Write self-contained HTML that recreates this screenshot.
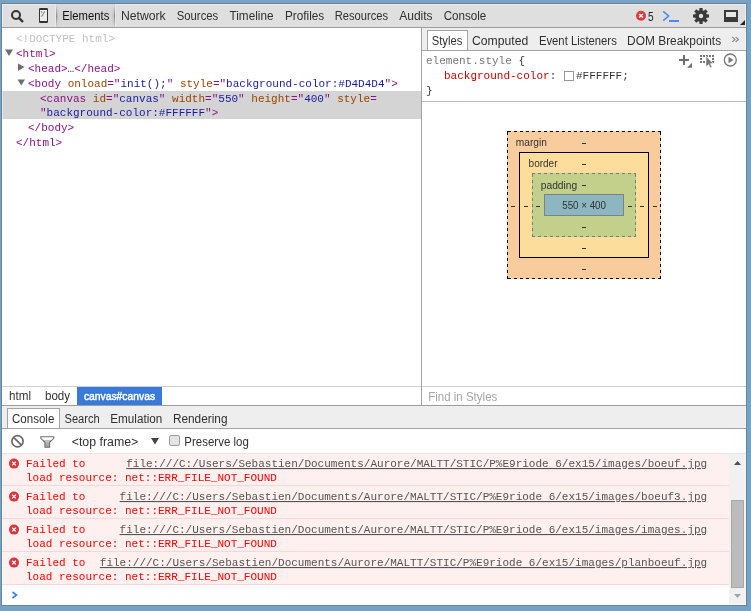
<!DOCTYPE html>
<html><head><meta charset="utf-8"><title>DevTools</title>
<style>
html,body{margin:0;padding:0;width:751px;height:611px;overflow:hidden;background:#7aa2c0;}
svg{display:block;will-change:transform;}
.ui{font-family:"Liberation Sans",sans-serif;font-size:12px;}
.mono{font-family:"Liberation Mono",monospace;font-size:11px;}
.c{shape-rendering:crispEdges;}
.bm{font-family:"Liberation Sans",sans-serif;font-size:10px;}
</style></head><body>
<svg width="751" height="611" viewBox="0 0 751 611">
<defs>
<linearGradient id="selTab" x1="0" y1="0" x2="0" y2="1">
<stop offset="0" stop-color="#dcdcdc"/><stop offset="0.5" stop-color="#d3d3d3"/><stop offset="1" stop-color="#dadada"/>
</linearGradient>
<linearGradient id="selEdge" x1="0" y1="0" x2="0" y2="1">
<stop offset="0" stop-color="#dcdcdc"/><stop offset="0.1" stop-color="#c8c8c8"/><stop offset="0.5" stop-color="#8a8a8a"/><stop offset="0.9" stop-color="#c4c4c4"/><stop offset="1" stop-color="#d8d8d8"/>
</linearGradient>
<linearGradient id="selEdge2" x1="0" y1="0" x2="0" y2="1">
<stop offset="0" stop-color="#dadada"/><stop offset="0.5" stop-color="#c2c2c2"/><stop offset="1" stop-color="#d6d6d6"/>
</linearGradient>
<linearGradient id="selEdge3" x1="0" y1="0" x2="0" y2="1">
<stop offset="0" stop-color="#dadada"/><stop offset="0.5" stop-color="#cbcbcb"/><stop offset="1" stop-color="#d6d6d6"/>
</linearGradient>
</defs>
<!-- window frame -->
<rect class="c" x="0" y="0" width="751" height="611" fill="#7aa2c0"/>
<rect class="c" x="1" y="3" width="746" height="603" fill="#5f87a5"/>
<rect class="c" x="2" y="4" width="744" height="601" fill="#ffffff"/>

<!-- main toolbar -->
<rect class="c" x="2" y="4" width="744" height="23" fill="#dfdfdf"/>
<rect class="c" x="2" y="4" width="744" height="1" fill="#ebe9e8"/>
<rect class="c" x="2" y="27" width="744" height="1" fill="#9d9d9d"/>
<!-- selected Elements tab -->
<rect class="c" x="56" y="4" width="59" height="23" fill="url(#selTab)"/>
<rect class="c" x="55" y="4" width="1" height="23" fill="#e7e7e7"/>
<rect class="c" x="115" y="4" width="1" height="23" fill="#e7e7e7"/>
<rect class="c" x="56" y="5" width="1" height="22" fill="url(#selEdge)"/>
<rect class="c" x="114" y="5" width="1" height="22" fill="url(#selEdge)"/>
<rect class="c" x="57" y="5" width="1" height="22" fill="url(#selEdge2)"/>
<rect class="c" x="113" y="5" width="1" height="22" fill="url(#selEdge2)"/>
<rect class="c" x="58" y="5" width="1" height="22" fill="url(#selEdge3)"/>
<rect class="c" x="112" y="5" width="1" height="22" fill="url(#selEdge3)"/>
<!-- search icon -->
<circle cx="16" cy="15" r="4" fill="none" stroke="#333" stroke-width="2"/>
<line x1="18.8" y1="17.8" x2="23" y2="22" stroke="#333" stroke-width="2.4"/>
<!-- phone icon -->
<rect x="39" y="8" width="9" height="15" rx="1.2" fill="#333"/>
<rect class="c" x="40" y="10" width="7" height="11" fill="#ececec"/>
<path d="M41.2 11.3 L42 12.8 M44.8 11.2 L41.5 16.8" stroke="#8a8a8a" stroke-width="1.1" fill="none"/>
<g class="ui" fill="#303030">
<text x="62.3" y="20" fill="#111" textLength="47.0" lengthAdjust="spacingAndGlyphs">Elements</text>
<text x="120.9" y="20" textLength="44.8" lengthAdjust="spacingAndGlyphs">Network</text>
<text x="176.8" y="20" textLength="41.4" lengthAdjust="spacingAndGlyphs">Sources</text>
<text x="229.5" y="20" textLength="44.0" lengthAdjust="spacingAndGlyphs">Timeline</text>
<text x="285.0" y="20" textLength="39.2" lengthAdjust="spacingAndGlyphs">Profiles</text>
<text x="334.7" y="20" textLength="53.4" lengthAdjust="spacingAndGlyphs">Resources</text>
<text x="399.2" y="20" textLength="33.4" lengthAdjust="spacingAndGlyphs">Audits</text>
<text x="443.7" y="20" textLength="42.6" lengthAdjust="spacingAndGlyphs">Console</text>
<text x="648" y="21.2" style="font-size:13px" textLength="5.6" lengthAdjust="spacingAndGlyphs" fill="#222">5</text>
</g>
<!-- error badge -->
<circle cx="641" cy="15.8" r="5" fill="#e03a3e"/>
<path d="M639.2 14 L642.8 17.6 M642.8 14 L639.2 17.6" stroke="#fff" stroke-width="1.4"/>
<!-- console drawer icon >_ -->
<path d="M663.2 11.4 L668.6 16 L663.2 20.6" stroke="#4a8af4" stroke-width="1.6" fill="none"/>
<rect class="c" x="669" y="20" width="10" height="2" fill="#4a8af4"/>
<!-- gear -->
<g transform="translate(701,16)" fill="#3a3a3a">
<circle r="6"/>
<g id="tooth"><rect x="-1.6" y="-8" width="3.2" height="4"/></g>
<rect x="-1.6" y="-8" width="3.2" height="4" transform="rotate(45)"/>
<rect x="-1.6" y="-8" width="3.2" height="4" transform="rotate(90)"/>
<rect x="-1.6" y="-8" width="3.2" height="4" transform="rotate(135)"/>
<rect x="-1.6" y="-8" width="3.2" height="4" transform="rotate(180)"/>
<rect x="-1.6" y="-8" width="3.2" height="4" transform="rotate(225)"/>
<rect x="-1.6" y="-8" width="3.2" height="4" transform="rotate(270)"/>
<rect x="-1.6" y="-8" width="3.2" height="4" transform="rotate(315)"/>
<circle r="2.2" fill="#dfdfdf"/>
</g>
<!-- dock icon -->
<rect class="c" x="724" y="10" width="14" height="12" fill="#3a3a3a"/>
<rect class="c" x="726" y="12" width="10" height="5" fill="#e6e6e6"/>
<path d="M745 20 L745 25 L740 25 Z" fill="#222"/>

<!-- ============ Elements tree ============ -->
<rect class="c" x="2" y="91" width="419" height="28" fill="#d4d4d4"/>
<!-- triangles -->
<path d="M5 49.5 L13 49.5 L9 56 Z" fill="#6e6e6e"/>
<path d="M18 63.5 L24.5 67 L18 71 Z" fill="#6e6e6e"/>
<path d="M17.5 79.5 L25 79.5 L21.25 85.5 Z" fill="#6e6e6e"/>
<g class="mono">
<text x="16" y="42" fill="#c0c0c0">&lt;!DOCTYPE html&gt;</text>
<text x="16" y="57" fill="#881280">&lt;html&gt;</text>
<text x="28" y="72"><tspan fill="#881280">&lt;head&gt;</tspan><tspan fill="#333">…</tspan><tspan fill="#881280">&lt;/head&gt;</tspan></text>
<text x="28" y="87"><tspan fill="#881280">&lt;body</tspan> <tspan fill="#994500">onload</tspan><tspan fill="#881280">="</tspan><tspan fill="#1a1aa6">init();</tspan><tspan fill="#881280">"</tspan> <tspan fill="#994500">style</tspan><tspan fill="#881280">="</tspan><tspan fill="#1a1aa6">background-color:#D4D4D4</tspan><tspan fill="#881280">"&gt;</tspan></text>
<text x="40" y="102"><tspan fill="#881280">&lt;canvas</tspan> <tspan fill="#994500">id</tspan><tspan fill="#881280">="</tspan><tspan fill="#1a1aa6">canvas</tspan><tspan fill="#881280">"</tspan> <tspan fill="#994500">width</tspan><tspan fill="#881280">="</tspan><tspan fill="#1a1aa6">550</tspan><tspan fill="#881280">"</tspan> <tspan fill="#994500">height</tspan><tspan fill="#881280">="</tspan><tspan fill="#1a1aa6">400</tspan><tspan fill="#881280">"</tspan> <tspan fill="#994500">style</tspan><tspan fill="#881280">=</tspan></text>
<text x="40" y="116"><tspan fill="#881280">"</tspan><tspan fill="#1a1aa6">background-color:#FFFFFF</tspan><tspan fill="#881280">"&gt;</tspan></text>
<text x="28" y="131" fill="#881280">&lt;/body&gt;</text>
<text x="16" y="146" fill="#881280">&lt;/html&gt;</text>
</g>

<!-- breadcrumbs -->
<rect class="c" x="2" y="386" width="419" height="1" fill="#cfcfcf"/>
<rect class="c" x="77" y="387" width="85" height="18" fill="#3879d9"/>
<g class="ui">
<text x="9.1" y="400" fill="#333" textLength="22.0" lengthAdjust="spacingAndGlyphs">html</text>
<text x="45.0" y="400" fill="#333" textLength="25.1" lengthAdjust="spacingAndGlyphs">body</text>
<text x="83.9" y="400" fill="#fff" stroke="#fff" stroke-width="0.45" style="font-size:11.5px" textLength="71.2" lengthAdjust="spacingAndGlyphs">canvas#canvas</text>
</g>

<!-- ============ sidebar ============ -->
<rect class="c" x="421" y="28" width="1" height="378" fill="#a3a3a3"/>
<rect class="c" x="422" y="28" width="324" height="22" fill="#eeeeee"/>
<rect class="c" x="422" y="50" width="324" height="1" fill="#a3a3a3"/>
<rect class="c" x="427.5" y="30.5" width="40" height="20" fill="#fff" stroke="#a3a3a3"/>
<g class="ui" fill="#303030">
<text x="431.7" y="45" textLength="30.6" lengthAdjust="spacingAndGlyphs">Styles</text>
<text x="472.0" y="45" textLength="56.2" lengthAdjust="spacingAndGlyphs">Computed</text>
<text x="538.9" y="45" textLength="77.9" lengthAdjust="spacingAndGlyphs">Event Listeners</text>
<text x="627.1" y="45" textLength="94.0" lengthAdjust="spacingAndGlyphs">DOM Breakpoints</text>

</g>
<g class="mono">
<text x="426" y="64"><tspan fill="#777">element.style</tspan><tspan fill="#333"> {</tspan></text>
<text x="444" y="79"><tspan fill="#c80000">background-color</tspan><tspan fill="#333">: </tspan></text>
<text x="576" y="79" fill="#333">#FFFFFF;</text>
<text x="426" y="94" fill="#333">}</text>
</g>
<rect x="564.5" y="71.5" width="9" height="9" fill="#fff" stroke="#999"/>
<rect class="c" x="422" y="101" width="324" height="1" fill="#bdbdbd"/>
<!-- sidebar icons -->
<path d="M732.2 36.9 L735 39.4 L732.2 41.9 M735.6 36.9 L738.4 39.4 L735.6 41.9" stroke="#808080" stroke-width="1.1" fill="none"/>
<path d="M679 60 H689 M684 55 V65" stroke="#6f6f6f" stroke-width="2"/>
<path d="M692 62.8 V67.7 H687.1 Z" fill="#6f6f6f"/>
<g fill="#777">
<rect x="700" y="55" width="2" height="2"/><rect x="703" y="55" width="2" height="2"/><rect x="706" y="55" width="2" height="2"/><rect x="709" y="55" width="2" height="2"/><rect x="712" y="55" width="2" height="2"/>
<rect x="700" y="58" width="2" height="2"/><rect x="700" y="61" width="2" height="2"/><rect x="703" y="61" width="2" height="2"/>
<rect x="712" y="58" width="2" height="2"/><rect x="712" y="61" width="2" height="2"/>
<path d="M706 56.3 L713.2 63.4 L710.4 63.7 L712 67 L710.2 67.9 L708.7 64.6 L706 66.8 Z" stroke="#fff" stroke-width="0.6" stroke-linejoin="round"/>
</g>
<circle cx="730.3" cy="60" r="6" fill="none" stroke="#777" stroke-width="1.3"/>
<path d="M728.5 56.8 L733.5 60 L728.5 63.2 Z" fill="#777"/>

<!-- box model -->
<g class="c">
<rect x="507" y="131" width="154" height="148" fill="#f9cc9d"/>
<path class="c" fill="#000" d="M508 131h3v1h-3zM508 278h3v1h-3zM514 131h3v1h-3zM514 278h3v1h-3zM520 131h3v1h-3zM520 278h3v1h-3zM526 131h3v1h-3zM526 278h3v1h-3zM532 131h3v1h-3zM532 278h3v1h-3zM538 131h3v1h-3zM538 278h3v1h-3zM544 131h3v1h-3zM544 278h3v1h-3zM550 131h3v1h-3zM550 278h3v1h-3zM556 131h3v1h-3zM556 278h3v1h-3zM562 131h3v1h-3zM562 278h3v1h-3zM568 131h3v1h-3zM568 278h3v1h-3zM574 131h3v1h-3zM574 278h3v1h-3zM580 131h3v1h-3zM580 278h3v1h-3zM586 131h3v1h-3zM586 278h3v1h-3zM592 131h3v1h-3zM592 278h3v1h-3zM598 131h3v1h-3zM598 278h3v1h-3zM604 131h3v1h-3zM604 278h3v1h-3zM610 131h3v1h-3zM610 278h3v1h-3zM616 131h3v1h-3zM616 278h3v1h-3zM622 131h3v1h-3zM622 278h3v1h-3zM628 131h3v1h-3zM628 278h3v1h-3zM634 131h3v1h-3zM634 278h3v1h-3zM640 131h3v1h-3zM640 278h3v1h-3zM646 131h3v1h-3zM646 278h3v1h-3zM652 131h3v1h-3zM652 278h3v1h-3zM658 131h3v1h-3zM658 278h3v1h-3zM507 132h1v3h-1zM660 132h1v3h-1zM507 138h1v3h-1zM660 138h1v3h-1zM507 144h1v3h-1zM660 144h1v3h-1zM507 150h1v3h-1zM660 150h1v3h-1zM507 156h1v3h-1zM660 156h1v3h-1zM507 162h1v3h-1zM660 162h1v3h-1zM507 168h1v3h-1zM660 168h1v3h-1zM507 174h1v3h-1zM660 174h1v3h-1zM507 180h1v3h-1zM660 180h1v3h-1zM507 186h1v3h-1zM660 186h1v3h-1zM507 192h1v3h-1zM660 192h1v3h-1zM507 198h1v3h-1zM660 198h1v3h-1zM507 204h1v3h-1zM660 204h1v3h-1zM507 210h1v3h-1zM660 210h1v3h-1zM507 216h1v3h-1zM660 216h1v3h-1zM507 222h1v3h-1zM660 222h1v3h-1zM507 228h1v3h-1zM660 228h1v3h-1zM507 234h1v3h-1zM660 234h1v3h-1zM507 240h1v3h-1zM660 240h1v3h-1zM507 246h1v3h-1zM660 246h1v3h-1zM507 252h1v3h-1zM660 252h1v3h-1zM507 258h1v3h-1zM660 258h1v3h-1zM507 264h1v3h-1zM660 264h1v3h-1zM507 270h1v3h-1zM660 270h1v3h-1zM507 276h1v3h-1zM660 276h1v3h-1zM507 131h1v1h-1z M507 278h1v1h-1z"/>
<rect x="519.5" y="152.5" width="129" height="105" fill="#fddd9b" stroke="#000"/>
<rect x="532" y="173" width="104" height="64" fill="#c3d08b"/>
<path class="c" fill="#7a7a7a" d="M532 173h3v1h-3z M532 236h3v1h-3z M538 173h3v1h-3z M538 236h3v1h-3z M544 173h3v1h-3z M544 236h3v1h-3z M550 173h3v1h-3z M550 236h3v1h-3z M556 173h3v1h-3z M556 236h3v1h-3z M562 173h3v1h-3z M562 236h3v1h-3z M568 173h3v1h-3z M568 236h3v1h-3z M574 173h3v1h-3z M574 236h3v1h-3z M580 173h3v1h-3z M580 236h3v1h-3z M586 173h3v1h-3z M586 236h3v1h-3z M592 173h3v1h-3z M592 236h3v1h-3z M598 173h3v1h-3z M598 236h3v1h-3z M604 173h3v1h-3z M604 236h3v1h-3z M610 173h3v1h-3z M610 236h3v1h-3z M616 173h3v1h-3z M616 236h3v1h-3z M622 173h3v1h-3z M622 236h3v1h-3z M628 173h3v1h-3z M628 236h3v1h-3z M634 173h2v1h-2z M634 236h2v1h-2z M532 234h1v3h-1z M635 234h1v3h-1z M532 228h1v3h-1z M635 228h1v3h-1z M532 222h1v3h-1z M635 222h1v3h-1z M532 216h1v3h-1z M635 216h1v3h-1z M532 210h1v3h-1z M635 210h1v3h-1z M532 204h1v3h-1z M635 204h1v3h-1z M532 198h1v3h-1z M635 198h1v3h-1z M532 192h1v3h-1z M635 192h1v3h-1z M532 186h1v3h-1z M635 186h1v3h-1z M532 180h1v3h-1z M635 180h1v3h-1z M532 174h1v3h-1z M635 174h1v3h-1z M532 173h1v1h-1z M635 173h1v1h-1z"/>
<rect x="544.5" y="194.5" width="79" height="21" fill="#8cb6c0" stroke="#808080"/>
</g>
<g class="bm" fill="#333">
<text x="515.8" y="146" textLength="31.2" lengthAdjust="spacingAndGlyphs">margin</text>
<text x="528.6" y="166.6">border</text>
<text x="540.8" y="188.5" textLength="36.4" lengthAdjust="spacingAndGlyphs">padding</text>
<text x="562.2" y="209" textLength="43.8" lengthAdjust="spacingAndGlyphs">550 × 400</text>
</g>
<g class="c" fill="#333">
<rect x="582" y="143" width="4" height="1"/>
<rect x="582" y="164" width="4" height="1"/>
<rect x="582" y="185" width="4" height="1"/>
<rect x="582" y="227" width="4" height="1"/>
<rect x="582" y="248" width="4" height="1"/>
<rect x="582" y="269" width="4" height="1"/>
<rect x="511" y="206" width="4" height="1"/>
<rect x="524" y="206" width="4" height="1"/>
<rect x="536" y="206" width="4" height="1"/>
<rect x="628" y="206" width="4" height="1"/>
<rect x="640" y="206" width="4" height="1"/>
<rect x="653" y="206" width="4" height="1"/>
</g>

<!-- find in styles -->
<rect class="c" x="422" y="386" width="324" height="1" fill="#cfcfcf"/>
<text class="ui" x="428.2" y="401" fill="#a6a6a6" textLength="69.1" lengthAdjust="spacingAndGlyphs">Find in Styles</text>

<!-- ============ drawer ============ -->
<rect class="c" x="2" y="405" width="744" height="1" fill="#9d9d9d"/>
<rect class="c" x="2" y="406" width="744" height="22" fill="#eeeeee"/>
<rect class="c" x="2" y="428" width="744" height="1" fill="#a3a3a3"/>
<rect class="c" x="7.5" y="408.5" width="52" height="20" fill="#fff" stroke="#a3a3a3"/>
<g class="ui" fill="#303030">
<text x="12.0" y="423" textLength="42.3" lengthAdjust="spacingAndGlyphs">Console</text>
<text x="64.5" y="423" textLength="35.2" lengthAdjust="spacingAndGlyphs">Search</text>
<text x="110.3" y="423" textLength="52.0" lengthAdjust="spacingAndGlyphs">Emulation</text>
<text x="172.9" y="423" textLength="54.6" lengthAdjust="spacingAndGlyphs">Rendering</text>
<text x="71.7" y="446" textLength="66.6" lengthAdjust="spacingAndGlyphs">&lt;top frame&gt;</text>
<text x="184.3" y="446" textLength="64.5" lengthAdjust="spacingAndGlyphs">Preserve log</text>
</g>
<!-- console toolbar icons -->
<circle cx="17.5" cy="441.3" r="5.6" fill="none" stroke="#6a6a6a" stroke-width="1.7"/>
<line x1="13.6" y1="437.4" x2="21.4" y2="445.2" stroke="#6a6a6a" stroke-width="1.7"/>
<linearGradient id="funnel" x1="0" y1="0" x2="0" y2="1"><stop offset="0" stop-color="#fff"/><stop offset="0.28" stop-color="#fff"/><stop offset="0.34" stop-color="#c4c4c4"/><stop offset="1" stop-color="#9c9c9c"/></linearGradient>
<path d="M40.8 436.8 H53.8 V438.3 L49.6 442.3 V447.3 H44.9 V442.3 L40.8 438.3 Z" fill="url(#funnel)" stroke="#707070" stroke-width="1.1" stroke-linejoin="miter"/>
<path d="M151 438 H159 L155 444.6 Z" fill="#444"/>
<rect x="169.5" y="435.5" width="10" height="10" rx="1.6" fill="#e4e4e4" stroke="#9a9a9a"/>
<rect class="c" x="2" y="453" width="744" height="1" fill="#e6e6e6"/>

<!-- console messages -->
<g class="c">
<rect x="2" y="454" width="727" height="31" fill="#fff0f0"/>
<rect x="2" y="485" width="727" height="1" fill="#ffd6d6"/>
<rect x="2" y="486" width="727" height="32" fill="#fff0f0"/>
<rect x="2" y="518" width="727" height="1" fill="#ffd6d6"/>
<rect x="2" y="519" width="727" height="32" fill="#fff0f0"/>
<rect x="2" y="551" width="727" height="1" fill="#ffd6d6"/>
<rect x="2" y="552" width="727" height="32" fill="#fff0f0"/>
<rect x="2" y="584" width="727" height="1" fill="#ffd6d6"/>
</g>
<g id="erricons" fill="#d9363e">
<circle cx="14" cy="463.6" r="5"/>
<circle cx="14" cy="496.6" r="5"/>
<circle cx="14" cy="529.6" r="5"/>
<circle cx="14" cy="562.6" r="5"/>
</g>
<g stroke="#fff" stroke-width="1.3">
<path d="M12.2 461.8 L15.8 465.4 M15.8 461.8 L12.2 465.4"/>
<path d="M12.2 494.8 L15.8 498.4 M15.8 494.8 L12.2 498.4"/>
<path d="M12.2 527.8 L15.8 531.4 M15.8 527.8 L12.2 531.4"/>
<path d="M12.2 560.8 L15.8 564.4 M15.8 560.8 L12.2 564.4"/>
</g>
<g class="mono" fill="#ff0000">
<text x="26" y="467">Failed to</text>
<text x="26" y="481">load resource: net::ERR_FILE_NOT_FOUND</text>
<text x="26" y="500">Failed to</text>
<text x="26" y="514">load resource: net::ERR_FILE_NOT_FOUND</text>
<text x="26" y="533">Failed to</text>
<text x="26" y="547">load resource: net::ERR_FILE_NOT_FOUND</text>
<text x="26" y="566">Failed to</text>
<text x="26" y="580">load resource: net::ERR_FILE_NOT_FOUND</text>
</g>
<g class="mono" fill="#545454" text-decoration="underline">
<text x="126.2" y="467">file:///C:/Users/Sebastien/Documents/Aurore/MALTT/STIC/P%E9riode 6/ex15/images/boeuf.jpg</text>
<text x="119.6" y="500">file:///C:/Users/Sebastien/Documents/Aurore/MALTT/STIC/P%E9riode 6/ex15/images/boeuf3.jpg</text>
<text x="119.6" y="533">file:///C:/Users/Sebastien/Documents/Aurore/MALTT/STIC/P%E9riode 6/ex15/images/images.jpg</text>
<text x="99.8" y="566">file:///C:/Users/Sebastien/Documents/Aurore/MALTT/STIC/P%E9riode 6/ex15/images/planboeuf.jpg</text>
</g>
<!-- prompt -->
<path d="M12.5 592 L16.5 595 L12.5 598" stroke="#367cf1" stroke-width="1.6" fill="none"/>

<!-- scrollbar -->
<rect class="c" x="729" y="454" width="17" height="151" fill="#f1f1f1"/>
<path d="M734 465 L741 465 L737.5 461 Z" fill="#505050"/>
<rect x="731.5" y="500.5" width="12" height="87" fill="#bcbcbc" stroke="#a8a8a8"/>
<path d="M734 594 L741 594 L737.5 598 Z" fill="#a3a3a3"/>
<!-- content highlight edges -->
<rect class="c" x="2" y="4" width="1" height="23" fill="#fff" fill-opacity="0.4"/>
<rect class="c" x="2" y="28" width="1" height="358" fill="#fff" fill-opacity="0.4"/>
<rect class="c" x="2" y="387" width="1" height="18" fill="#fff" fill-opacity="0.4"/>
<rect class="c" x="2" y="406" width="1" height="22" fill="#fff" fill-opacity="0.4"/>
<rect class="c" x="2" y="429" width="1" height="24" fill="#fff" fill-opacity="0.4"/>
<rect class="c" x="2" y="454" width="1" height="31" fill="#fff" fill-opacity="0.4"/>
<rect class="c" x="2" y="486" width="1" height="32" fill="#fff" fill-opacity="0.4"/>
<rect class="c" x="2" y="519" width="1" height="32" fill="#fff" fill-opacity="0.4"/>
<rect class="c" x="2" y="552" width="1" height="32" fill="#fff" fill-opacity="0.4"/>
<rect class="c" x="2" y="585" width="1" height="20" fill="#fff" fill-opacity="0.4"/>
<rect class="c" x="745" y="4" width="1" height="23" fill="#fff" fill-opacity="0.6"/>
<rect class="c" x="745" y="28" width="1" height="22" fill="#fff" fill-opacity="0.6"/>
<rect class="c" x="745" y="51" width="1" height="50" fill="#fff" fill-opacity="0.6"/>
<rect class="c" x="745" y="102" width="1" height="284" fill="#fff" fill-opacity="0.6"/>
<rect class="c" x="745" y="387" width="1" height="18" fill="#fff" fill-opacity="0.6"/>
<rect class="c" x="745" y="406" width="1" height="22" fill="#fff" fill-opacity="0.6"/>
<rect class="c" x="745" y="429" width="1" height="24" fill="#fff" fill-opacity="0.6"/>
<rect class="c" x="745" y="454" width="1" height="151" fill="#fff" fill-opacity="0.6"/>
<rect class="c" x="2" y="604" width="744" height="1" fill="#ffffff" fill-opacity="0.6"/>
</svg>
</body></html>
